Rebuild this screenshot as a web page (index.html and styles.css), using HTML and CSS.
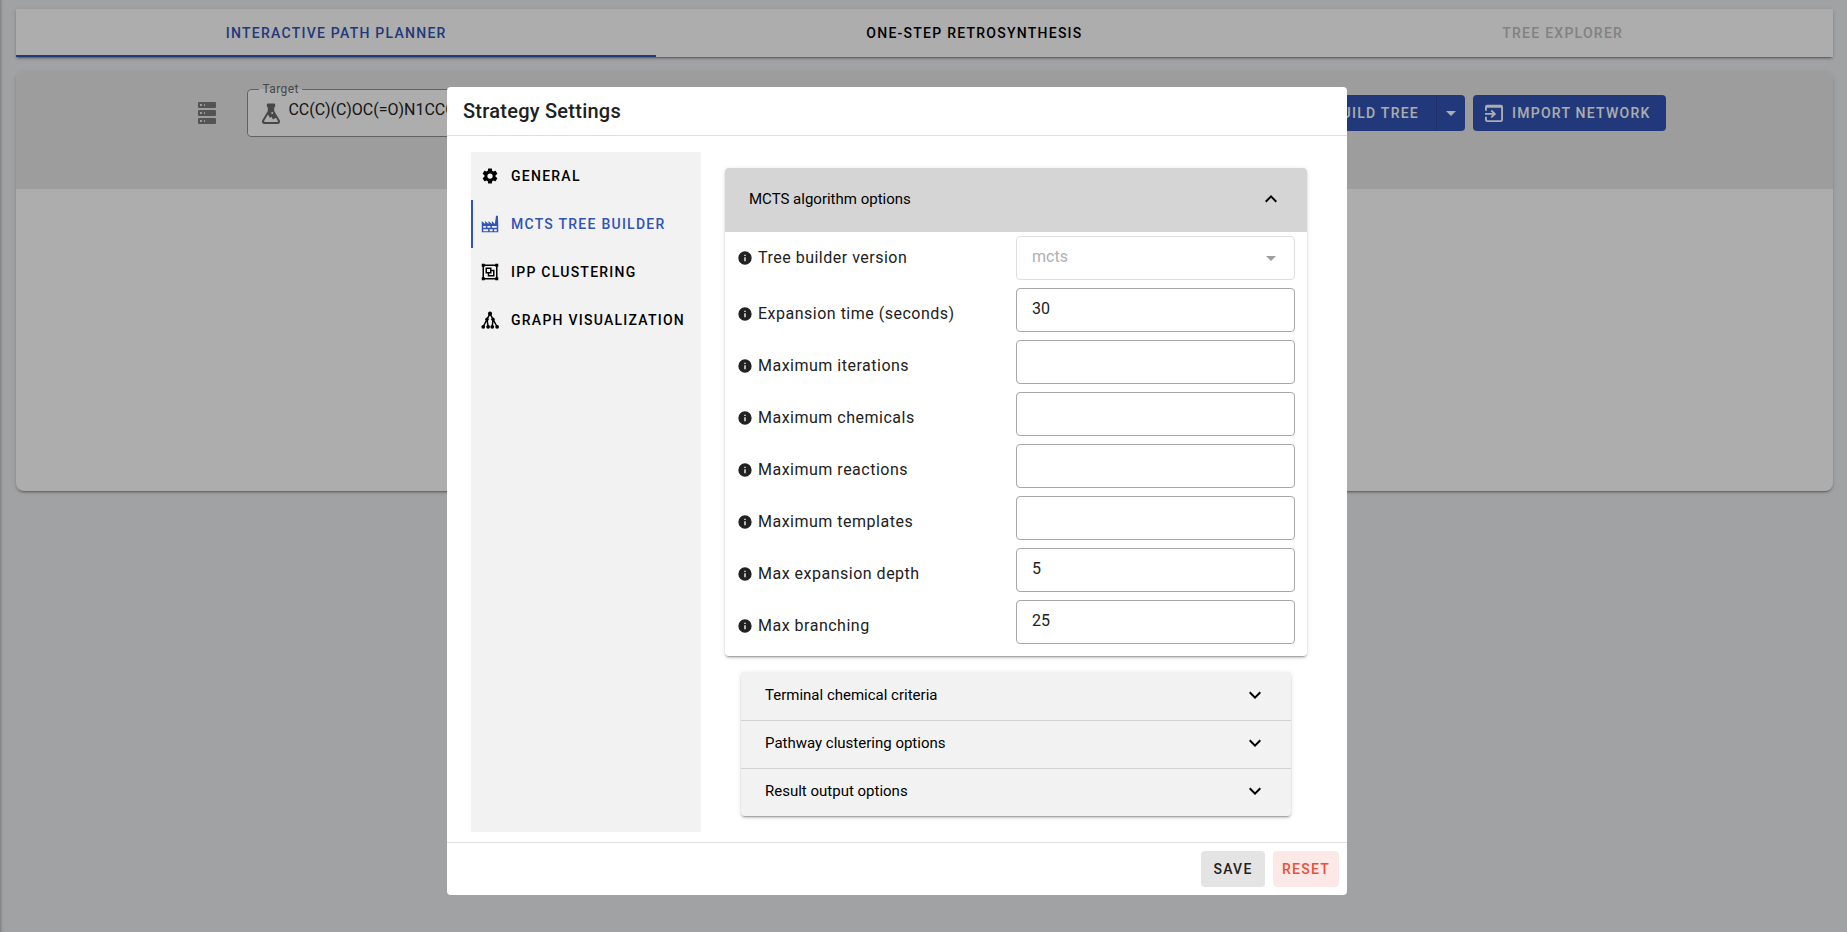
FILE: index.html
```html
<!DOCTYPE html>
<html lang="en">
<head>
<meta charset="utf-8">
<title>Interactive Path Planner</title>
<link rel="stylesheet" href="styles.css">
</head>
<body>
<main class="page">
  <nav class="tabs">
    <button class="tab tab-active">Interactive Path Planner</button>
    <button class="tab">One-Step Retrosynthesis</button>
    <button class="tab" disabled>Tree Explorer</button>
  </nav>
  <section class="planner">
    <div class="toolbar">
      <div class="toolbar-row">
        <button class="icon-btn" aria-label="Saved targets"><svg class="icon24" viewBox="0 0 24 24"><path fill-rule="evenodd" d="M4,1H20A1,1 0 0,1 21,2V6A1,1 0 0,1 20,7H4A1,1 0 0,1 3,6V2A1,1 0 0,1 4,1M4,9H20A1,1 0 0,1 21,10V14A1,1 0 0,1 20,15H4A1,1 0 0,1 3,14V10A1,1 0 0,1 4,9M4,17H20A1,1 0 0,1 21,18V22A1,1 0 0,1 20,23H4A1,1 0 0,1 3,22V18A1,1 0 0,1 4,17M9,5H10V3H9V5M9,13H10V11H9V13M9,21H10V19H9V21M5,3V5H7V3H5M5,11V13H7V11H5M5,19V21H7V19H5Z"/></svg></button>
        <fieldset class="target">
          <legend><label for="target">Target</label></legend>
          <div class="target-inner">
            <svg class="icon24" viewBox="0 0 24 24"><path fill-rule="evenodd" d="M9,1.500H15Q16.200,1.500 16.200,2.700V4.500L15.200,5.500V9L20.600,18A2.500,2.500 0 0,1 18.500,22H5.500A2.500,2.500 0 0,1 3.400,18L8.800,9V5.500L7.800,4.500V2.700Q7.800,1.500 9,1.500ZM9,12.500L5.200,18.800Q4.900,20 5.800,20H18.200Q19.100,20 18.800,18.800L17,15.800L14,17.500L12.500,14.800L11,16ZM13.200,10A1,1 0 1,0 13.200,12A1,1 0 1,0 13.200,10Z"/></svg>
            <input id="target" class="target-input" type="text" value="CC(C)(C)OC(=O)N1CCC(O)CC1">
          </div>
        </fieldset>
        <div class="split">
          <button class="btn primary split-main">Build tree</button>
          <button class="btn primary split-menu" aria-label="Build tree options"><svg class="icon24" viewBox="0 0 24 24"><path d="M7,10L12,15L17,10H7Z"/></svg></button>
        </div>
        <button class="btn primary import"><svg class="icon18" viewBox="0 0 24 24"><path fill-rule="evenodd" d="M3,1H21A3,3 0 0,1 24,4V21A3,3 0 0,1 21,24H3A3,3 0 0,1 0,21V17H2.500V21.500H21.500V5H2.500V9H0V4A3,3 0 0,1 3,1ZM0,12H10L7.500,9.500L9.300,7.700L14.800,13.200L9.300,18.700L7.500,16.900L10,14.400H0Z"/></svg>Import network</button>
      </div>
    </div>
  </section>
</main>

<div class="overlay">
  <section class="dialog" role="dialog" aria-labelledby="dialog-title">
    <h1 class="dialog-title" id="dialog-title">Strategy Settings</h1>
    <div class="dialog-body">
      <nav class="side">
        <button class="side-tab"><svg class="icon18" viewBox="0 0 24 24"><path d="M12,15.500A3.500,3.500 0 0,1 8.500,12A3.500,3.500 0 0,1 12,8.500A3.500,3.500 0 0,1 15.500,12A3.500,3.500 0 0,1 12,15.500M19.430,12.970C19.470,12.650 19.500,12.330 19.500,12C19.500,11.670 19.470,11.340 19.430,11L21.540,9.370C21.730,9.220 21.780,8.950 21.660,8.730L19.660,5.270C19.540,5.050 19.270,4.960 19.050,5.050L16.560,6.050C16.040,5.660 15.500,5.320 14.870,5.070L14.500,2.420C14.460,2.180 14.250,2 14,2H10C9.750,2 9.540,2.180 9.500,2.420L9.130,5.070C8.500,5.320 7.960,5.660 7.440,6.050L4.950,5.050C4.730,4.960 4.460,5.050 4.340,5.270L2.340,8.730C2.210,8.950 2.270,9.220 2.460,9.370L4.570,11C4.530,11.340 4.500,11.670 4.500,12C4.500,12.330 4.530,12.650 4.570,12.970L2.460,14.630C2.270,14.780 2.210,15.050 2.340,15.270L4.340,18.730C4.460,18.950 4.730,19.030 4.950,18.950L7.440,17.940C7.960,18.340 8.500,18.680 9.130,18.930L9.500,21.580C9.540,21.820 9.750,22 10,22H14C14.250,22 14.460,21.820 14.500,21.580L14.870,18.930C15.500,18.670 16.040,18.340 16.560,17.940L19.050,18.950C19.270,19.030 19.540,18.950 19.660,18.730L21.660,15.270C21.780,15.050 21.730,14.780 21.540,14.630L19.430,12.970Z"/></svg>General</button>
        <button class="side-tab side-active"><svg class="icon18" viewBox="0 0 24 24"><path fill-rule="evenodd" d="M1,23V8L5.500,12V8L10,12V8L14.500,12V8L18.500,12L20,1H22.500L23,12V23ZM3,14.500V17H6.500V14.500ZM8.500,14.500V17H12.500V14.500ZM14.500,14.500V17H21V14.500ZM3,19V21.500H9.500V19ZM11.500,19V21.500H15.500V19ZM17.500,19V21.500H21V19Z"/></svg>MCTS Tree Builder</button>
        <button class="side-tab"><svg class="icon18" viewBox="0 0 24 24"><path fill-rule="evenodd" d="M1,1V5H2V19H1V23H5V22H19V23H23V19H22V5H23V1H19V2H5V1M5,4H19V5H20V19H19V20H5V19H4V5H5M6,6V14H9V18H18V9H14V6M8,8H12V12H8M14,11H16V16H11V14H14"/></svg>IPP Clustering</button>
        <button class="side-tab"><svg class="icon18" viewBox="0 0 24 24"><circle cx="12" cy="3.500" r="2.700"/><circle cx="8" cy="11" r="2.300"/><circle cx="16" cy="11" r="2.300"/><circle cx="3" cy="21" r="2.500"/><circle cx="9.500" cy="21" r="2.500"/><circle cx="15" cy="21" r="2.500"/><circle cx="21.500" cy="21" r="2.500"/><path class="edges" d="M12,3.500L8,11L3,21M12,3.500L16,11L21.500,21M8,11L9.500,21M16,11L15,21"/></svg>Graph Visualization</button>
      </nav>
      <div class="options">
        <section class="panel">
          <button class="panel-head" aria-expanded="true">MCTS algorithm options<svg class="icon24" viewBox="0 0 24 24"><path d="M7.410,15.410L12,10.830L16.590,15.410L18,14L12,8L6,14L7.410,15.410Z"/></svg></button>
          <div class="fields">
            <div class="field"><label for="f1"><svg class="info" viewBox="0 0 24 24"><use href="#info"/></svg>Tree builder version</label><span class="select-wrap"><select id="f1" class="control" disabled><option>mcts</option></select><svg class="icon24 caret" viewBox="0 0 24 24"><path d="M7,10L12,15L17,10H7Z"/></svg></span></div>
            <div class="field"><label for="f2"><svg class="info" viewBox="0 0 24 24"><use href="#info"/></svg>Expansion time (seconds)</label><input id="f2" class="control" type="text" value="30"></div>
            <div class="field"><label for="f3"><svg class="info" viewBox="0 0 24 24"><use href="#info"/></svg>Maximum iterations</label><input id="f3" class="control" type="text"></div>
            <div class="field"><label for="f4"><svg class="info" viewBox="0 0 24 24"><use href="#info"/></svg>Maximum chemicals</label><input id="f4" class="control" type="text"></div>
            <div class="field"><label for="f5"><svg class="info" viewBox="0 0 24 24"><use href="#info"/></svg>Maximum reactions</label><input id="f5" class="control" type="text"></div>
            <div class="field"><label for="f6"><svg class="info" viewBox="0 0 24 24"><use href="#info"/></svg>Maximum templates</label><input id="f6" class="control" type="text"></div>
            <div class="field"><label for="f7"><svg class="info" viewBox="0 0 24 24"><use href="#info"/></svg>Max expansion depth</label><input id="f7" class="control" type="text" value="5"></div>
            <div class="field"><label for="f8"><svg class="info" viewBox="0 0 24 24"><use href="#info"/></svg>Max branching</label><input id="f8" class="control" type="text" value="25"></div>
          </div>
        </section>
        <div class="collapsed">
          <button class="row-head" aria-expanded="false">Terminal chemical criteria<svg class="icon24" viewBox="0 0 24 24"><use href="#down"/></svg></button>
          <button class="row-head" aria-expanded="false">Pathway clustering options<svg class="icon24" viewBox="0 0 24 24"><use href="#down"/></svg></button>
          <button class="row-head" aria-expanded="false">Result output options<svg class="icon24" viewBox="0 0 24 24"><use href="#down"/></svg></button>
        </div>
      </div>
    </div>
    <footer class="dialog-foot">
      <button class="btn save">Save</button>
      <button class="btn reset">Reset</button>
    </footer>
  </section>
</div>
<svg class="defs" aria-hidden="true"><defs>
  <path id="info" d="M13,9H11V7H13M13,17H11V11H13M12,2A10,10 0 0,0 2,12A10,10 0 0,0 12,22A10,10 0 0,0 22,12A10,10 0 0,0 12,2Z"/>
  <path id="down" d="M7.410,8.580L12,13.170L16.590,8.580L18,10L12,16L6,10L7.410,8.580Z"/>
</defs></svg>
</body>
</html>
```

FILE: styles.css
```css
* { box-sizing: border-box; }
body {
  margin: 0;
  min-height: 100vh;
  background: #edeff2;
  color: #212121;
  font: 16px/24px Roboto, sans-serif;
}
button, input, select { font: inherit; color: inherit; }
button { border: 0; background: none; padding: 0; cursor: pointer; }
svg { fill: currentColor; flex: none; }
.defs { position: absolute; width: 0; height: 0; }
.icon24 { width: 24px; height: 24px; }
.icon18 { width: 18px; height: 18px; }

.page {
  min-height: 100vh;
  padding: 9px 14px 0 16px;
  box-shadow: inset 3px 0 3px -2px rgba(0, 0, 0, .25);
}
.tabs {
  display: flex;
  background: #fff;
  box-shadow: 0 3px 1px -2px rgba(0, 0, 0, .2), 0 2px 2px rgba(0, 0, 0, .14), 0 1px 5px rgba(0, 0, 0, .12);
}
.tab, .btn, .side-tab {
  font-size: 14px;
  font-weight: 500;
  letter-spacing: .0892857em;
  text-transform: uppercase;
  white-space: nowrap;
}
.tab {
  flex: 1 1 auto;
  height: 48px;
  padding: 0 16px;
  color: #000;
  border: solid transparent;
  border-width: 2px 0;
}
.tab-active { color: #3254b4; border-bottom-color: #3254b4; }
.tab:disabled { color: #c0c0c0; }

.planner {
  margin-top: 15px;
  height: 419px;
  background: #fff;
  border-radius: 8px;
  overflow: hidden;
  box-shadow: 0 3px 1px -2px rgba(0, 0, 0, .2), 0 2px 2px rgba(0, 0, 0, .14), 0 1px 5px rgba(0, 0, 0, .12);
}
.toolbar { height: 117px; background: #e8e8e8; padding-top: 10px; }
.toolbar-row {
  display: flex;
  align-items: flex-start;
  width: 83.3333%;
  margin: 0 auto;
  padding: 0 16px;
}
.icon-btn {
  display: grid;
  place-items: center;
  width: 48px;
  height: 62px;
  color: #7c7c7c;
}
.target {
  flex: 1;
  min-width: 0;
  height: 55px;
  margin: 0 24px 0 16px;
  padding: 0 8px 0 11px;
  border: 1px solid #8f8f8f;
  border-radius: 4px;
  background: #fff;
}
.target legend {
  padding: 0 3px;
  font-size: 12px;
  line-height: 14px;
  letter-spacing: .4px;
  color: #6a6a6a;
}
.target-inner { display: flex; align-items: flex-end; gap: 5px; height: 30px; color: #6a6a6a; }
.target-input {
  flex: 1;
  height: 30px;
  padding: 0 0 4px;
  border: 0;
  background: none;
  color: #212121;
  outline: 0;
}
.btn {
  display: flex;
  align-items: center;
  justify-content: center;
  height: 36px;
  border-radius: 4px;
}
.primary { background: #3254b4; color: #fff; margin-top: 13px; }
.split { display: flex; margin-right: 8px; }
.split-main { padding: 0 17px 0 16px; border-radius: 4px 0 0 4px; }
.split-menu { width: 29px; border-left: 1px solid #2a4898; border-radius: 0 4px 4px 0; }
.import { gap: 9px; padding: 0 15px 0 12px; }

.overlay {
  position: fixed;
  inset: 0;
  display: flex;
  align-items: center;
  justify-content: center;
  padding: 50px 53px 0 0;
  background: rgba(0, 0, 0, .32);
}
.dialog {
  width: 100%;
  max-width: 900px;
  background: #fff;
  border-radius: 4px;
}
.dialog-title {
  margin: 0;
  padding: 8px 16px;
  border-bottom: 1px solid #e0e0e0;
  font-size: 20px;
  line-height: 32px;
  font-weight: 500;
  letter-spacing: .0125em;
}
.dialog-body { display: flex; gap: 24px; padding: 16px 40px 10px 24px; }
.side { width: 230px; background: #f2f2f2; }
.side-tab {
  display: flex;
  align-items: center;
  gap: 12px;
  width: 100%;
  height: 48px;
  padding: 0 8px;
  border-left: 2px solid transparent;
  color: #000;
}
.side-active { color: #3254b4; border-left-color: #3254b4; }
.edges { fill: none; stroke: currentColor; stroke-width: 2; }
.options { flex: 1; padding: 16px 0; }
.panel, .collapsed {
  border-radius: 4px;
  box-shadow: 0 3px 1px -2px rgba(0, 0, 0, .2), 0 2px 2px rgba(0, 0, 0, .14), 0 1px 5px rgba(0, 0, 0, .12);
}
.panel-head, .row-head {
  display: flex;
  align-items: center;
  justify-content: space-between;
  width: 100%;
  padding: 0 24px 2px;
  font-size: 15px;
  color: #000;
}
.panel-head { height: 64px; background: #d5d5d5; border-radius: 4px 4px 0 0; }
.fields { display: grid; gap: 8px; padding: 4px 12px 12px; }
.field { display: grid; grid-template-columns: 1fr 1fr; align-items: center; }
.field label {
  display: flex;
  align-items: center;
  gap: 5px;
  padding-top: 8px;
  letter-spacing: .03125em;
}
.field:first-child label { padding-top: 0; }
.info { width: 16px; height: 16px; }
.control {
  width: 100%;
  height: 44px;
  padding: 0 15px 4px;
  border: 1px solid #a8a8a8;
  border-radius: 4px;
  background: #fff;
  appearance: none;
  opacity: 1;
}
.control:disabled { padding-bottom: 2px; border-color: #dedede; color: #b0b0b0; }
.select-wrap { display: grid; align-items: center; }
.select-wrap > * { grid-area: 1 / 1; }
.caret { justify-self: end; margin-right: 12px; color: #9e9e9e; pointer-events: none; }
.collapsed { margin: 16px 16px 0; background: #f2f2f2; overflow: hidden; }
.row-head { height: 48px; }
.row-head + .row-head { padding-bottom: 4px; border-top: 1px solid #d2d2d2; }
.dialog-foot {
  display: flex;
  justify-content: flex-end;
  gap: 8px;
  padding: 8px;
  border-top: 1px solid #e0e0e0;
}
.save { width: 64px; background: #e4e4e4; }
.reset { width: 66px; background: #fce9e7; color: #e8503a; }
```
